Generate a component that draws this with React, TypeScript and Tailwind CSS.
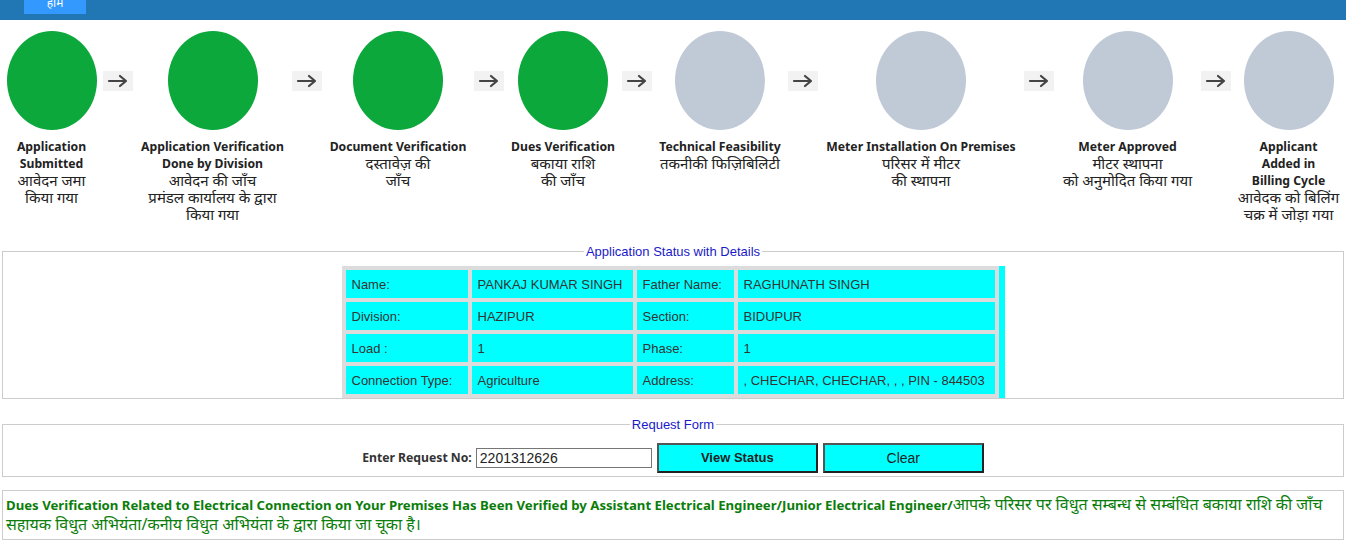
import React from "react";

type Step = { w: number; done: boolean; en: string[]; hi: string[] };

const steps: Step[] = [
  { w: 103, done: true, en: ["Application", "Submitted"], hi: ["आवेदन जमा", "किया गया"] },
  { w: 159, done: true, en: ["Application Verification", "Done by Division"], hi: ["आवेदन की जाँच", "प्रमंडल कार्यालय के द्वारा", "किया गया"] },
  { w: 152, done: true, en: ["Document Verification"], hi: ["दस्तावेज़ की", "जाँच"] },
  { w: 118, done: true, en: ["Dues Verification"], hi: ["बकाया राशि", "की जाँच"] },
  { w: 136, done: false, en: ["Technical Feasibility"], hi: ["तकनीकी फिज़िबिलिटी"] },
  { w: 206, done: false, en: ["Meter Installation On Premises"], hi: ["परिसर में मीटर", "की स्थापना"] },
  { w: 147, done: false, en: ["Meter Approved"], hi: ["मीटर स्थापना", "को अनुमोदित किया गया"] },
  { w: 115, done: false, en: ["Applicant", "Added in", "Billing Cycle"], hi: ["आवेदक को बिलिंग", "चक्र में जोड़ा गया"] },
];

const sans = { fontFamily: '"Noto Sans", "Noto Sans Devanagari", sans-serif' };
const arial = { fontFamily: '"Liberation Sans", Arial, "Noto Sans Devanagari", sans-serif' };

function Arrow() {
  return (
    <div className="w-[30px] h-[20px] mt-[40px] bg-[#f2f2f2] flex items-center justify-center shrink-0">
      <svg width="22" height="14" viewBox="0 0 22 14">
        <path d="M2 7 H19 M13 2 L19 7 L13 12" stroke="#444" strokeWidth="2.2" fill="none" strokeLinecap="round" strokeLinejoin="round" />
      </svg>
    </div>
  );
}

const rows: [string, string, string, string][] = [
  ["Name:", "PANKAJ KUMAR SINGH", "Father Name:", "RAGHUNATH SINGH"],
  ["Division:", "HAZIPUR", "Section:", "BIDUPUR"],
  ["Load :", "1", "Phase:", "1"],
  ["Connection Type:", "Agriculture", "Address:", ", CHECHAR, CHECHAR, , , PIN - 844503"],
];

export default function App() {
  return (
    <div className="w-[1346px] bg-white text-[#222]" style={sans}>
      {/* top bar */}
      <div className="h-[20px] bg-[#2176b4] flex">
        <div className="ml-[24px] w-[62px] h-[14px] bg-[#3399ff] overflow-hidden flex justify-center">
          <span className="text-white text-[12px] leading-[16px] -mt-[5px]">होम</span>
        </div>
      </div>

      {/* steps */}
      <div className="flex items-start pt-[11px]">
        {steps.map((s, i) => (
          <React.Fragment key={i}>
            {i > 0 && <Arrow />}
            <div className="flex flex-col items-center shrink-0" style={{ width: s.w }}>
              <div className={`w-[90px] h-[99px] rounded-[50%] ${s.done ? "bg-[#0ca83c]" : "bg-[#bfcad6]"}`} />
              <div className="mt-[8px] text-center leading-[17px] text-[#222] whitespace-nowrap">
                {s.en.map((t, j) => (
                  <div key={j} className="font-bold text-[12.2px]">{t}</div>
                ))}
                {s.hi.map((t, j) => (
                  <div key={j} className="text-[15px]">{t}</div>
                ))}
              </div>
            </div>
          </React.Fragment>
        ))}
      </div>

      {/* Application status fieldset */}
      <fieldset className="mx-[2px] mt-[21px] border border-[#cccccc] pt-[7px] px-0 pb-0">
        <legend className="mx-auto px-[2px] text-[13px] leading-[15px] text-[#1a1ac8]" style={arial}>
          Application Status with Details
        </legend>
        <table className="mx-auto border-separate border-spacing-[4px] bg-[#dcdcdc] border-r-[6px] border-r-[#00ffff] text-[13px] text-[#333]" style={arial}>
          <tbody>
            {rows.map((r, i) => (
              <tr key={i}>
                <td className="w-[122px] h-[28px] px-[6px] pt-[2px] pb-0 bg-[#00ffff] whitespace-nowrap">{r[0]}</td>
                <td className="w-[161px] h-[28px] px-[6px] pt-[2px] pb-0 bg-[#00ffff] whitespace-nowrap">{r[1]}</td>
                <td className="w-[97px] h-[28px] px-[6px] pt-[2px] pb-0 bg-[#00ffff] whitespace-nowrap">{r[2]}</td>
                <td className="w-[257px] h-[28px] px-[6px] pt-[2px] pb-0 bg-[#00ffff] whitespace-nowrap">{r[3]}</td>
              </tr>
            ))}
          </tbody>
        </table>
      </fieldset>

      {/* Request form */}
      <fieldset className="mx-[2px] mt-[18px] border border-[#cccccc] pt-[11px] px-0 pb-[3px]">
        <legend className="mx-auto px-[2px] text-[13px] leading-[15px] text-[#1a1ac8]" style={arial}>
          Request Form
        </legend>
        <div className="flex items-center justify-center">
          <span className="text-[12.2px] font-bold text-[#333] mr-[4px]">Enter Request No:</span>
          <input
            readOnly
            value="2201312626"
            className="w-[176px] h-[20px] border border-[#767676] px-[3px] text-[14px] text-[#222] outline-none"
            style={arial}
          />
          <button
            className="ml-[5px] w-[161px] h-[30px] bg-[#00ffff] border-2 border-t-[#555] border-l-[#555] border-b-[#222] border-r-[#222] text-[13px] font-bold text-[#222]"
            style={arial}
          >
            View Status
          </button>
          <button
            className="ml-[5px] w-[161px] h-[30px] bg-[#00ffff] border-2 border-t-[#555] border-l-[#555] border-b-[#222] border-r-[#222] text-[14px] text-[#222]"
            style={arial}
          >
            Clear
          </button>
        </div>
      </fieldset>

      {/* Message */}
      <div className="mx-[2px] mt-[13px] h-[50px] border border-[#cccccc] px-[3px] pt-[4px] leading-[19px] text-[#0b7d0b] whitespace-nowrap">
        <span className="font-bold text-[13.2px]">
          Dues Verification Related to Electrical Connection on Your Premises Has Been Verified by Assistant Electrical Engineer/Junior Electrical Engineer/
        </span>
        <span className="text-[16px]">आपके परिसर पर विधुत सम्बन्ध से सम्बंधित बकाया राशि की जाँच</span>
        <br />
        <span className="text-[16px]">सहायक विधुत अभियंता/कनीय विधुत अभियंता के द्वारा किया जा चूका है।</span>
      </div>
    </div>
  );
}
